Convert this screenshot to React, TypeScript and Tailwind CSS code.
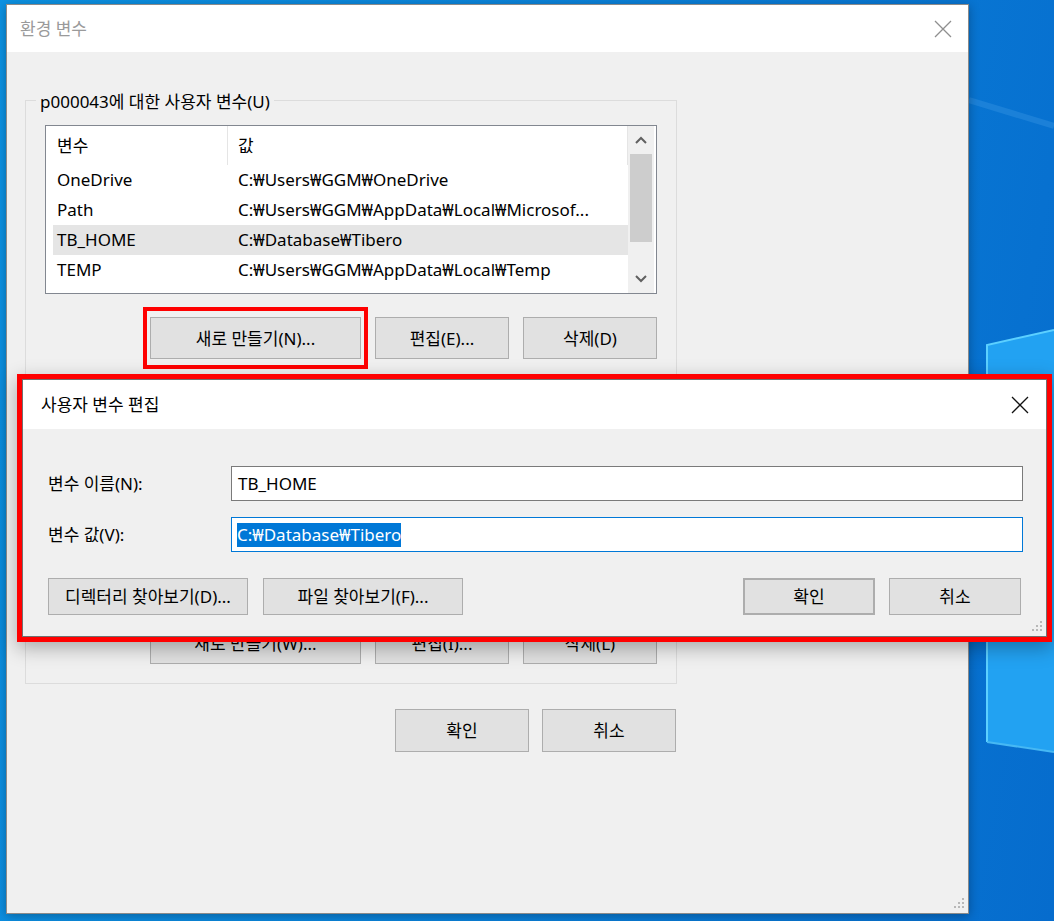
import type { ReactNode } from 'react';

const rows = [
  { name: 'OneDrive', value: 'C:₩Users₩GGM₩OneDrive' },
  { name: 'Path', value: 'C:₩Users₩GGM₩AppData₩Local₩Microsof...' },
  { name: 'TB_HOME', value: 'C:₩Database₩Tibero', selected: true },
  { name: 'TEMP', value: 'C:₩Users₩GGM₩AppData₩Local₩Temp' },
];

function CloseIcon({ color }: { color: string }) {
  return (
    <svg width="18" height="18" viewBox="0 0 18 18">
      <path d="M1 1 L17 17 M17 1 L1 17" stroke={color} strokeWidth="1.3" fill="none" />
    </svg>
  );
}

function Grip() {
  return (
    <svg width="12" height="12" viewBox="0 0 12 12">
      <rect x="9" y="0" width="2" height="2" fill="#b8b8b8" />
      <rect x="5" y="4" width="2" height="2" fill="#b8b8b8" />
      <rect x="9" y="4" width="2" height="2" fill="#b8b8b8" />
      <rect x="1" y="8" width="2" height="2" fill="#b8b8b8" />
      <rect x="5" y="8" width="2" height="2" fill="#b8b8b8" />
      <rect x="9" y="8" width="2" height="2" fill="#b8b8b8" />
    </svg>
  );
}

function Chevron({ up }: { up?: boolean }) {
  return (
    <svg width="12" height="8" viewBox="0 0 12 8">
      <path d={up ? 'M1 7 L6 2 L11 7' : 'M1 1 L6 6 L11 1'} stroke="#606060" strokeWidth="2" fill="none" />
    </svg>
  );
}

function WinButton({ children, className = '' }: { children: ReactNode; className?: string }) {
  return (
    <div
      className={`flex items-center justify-center border border-[#adadad] bg-[#e1e1e1] text-[17px] leading-none text-black ${className}`}
    >
      {children}
    </div>
  );
}

function VarList() {
  return (
    <div className="flex h-[169px] w-[612px] border border-[#828790] bg-white">
      <div className="flex min-w-0 flex-1 flex-col overflow-hidden">
        <div className="flex h-[39px] shrink-0 items-center border-r border-[#e5e5e5]">
          <div className="flex h-full w-[182px] items-center border-r border-[#e5e5e5] pl-[11px]">변수</div>
          <div className="pl-[10px]">값</div>
        </div>
        {rows.map((r) => (
          <div
            key={r.name}
            className={`ml-[7px] flex h-[30px] shrink-0 items-center whitespace-nowrap ${r.selected ? 'bg-[#e5e5e5]' : ''}`}
          >
            <div className="w-[175px] pl-[4px]">{r.name}</div>
            <div className="overflow-hidden pl-[10px]">{r.value}</div>
          </div>
        ))}
      </div>
      <div className="mr-[2px] flex w-[26px] flex-col bg-[#f0f0f0]">
        <div className="flex h-[28px] items-center justify-center">
          <Chevron up />
        </div>
        <div className="mx-[2px] h-[88px] bg-[#cdcdcd]" />
        <div className="flex-1" />
        <div className="flex h-[28px] items-center justify-center">
          <Chevron />
        </div>
      </div>
    </div>
  );
}

function ButtonRow({ highlight }: { highlight?: boolean }) {
  return (
    <div className="flex justify-end gap-[14px] pr-[19px]">
      <div className="relative">
        <WinButton className="h-[42px] w-[211px]">{highlight ? '새로 만들기(N)...' : '새로 만들기(W)...'}</WinButton>
        {highlight && <div className="absolute -inset-x-[7px] -inset-y-[10px] border-4 border-[#ff0000]" />}
      </div>
      <WinButton className="h-[42px] w-[134px]">{highlight ? '편집(E)...' : '편집(I)...'}</WinButton>
      <WinButton className="h-[42px] w-[134px]">{highlight ? '삭제(D)' : '삭제(L)'}</WinButton>
    </div>
  );
}

export default function App() {
  return (
    <div className="relative h-[921px] w-[1054px] overflow-hidden bg-[linear-gradient(100deg,#0c93e4_0%,#0a80d9_55%,#066ccd_100%)] font-['Noto_Sans','Noto_Sans_CJK_KR',sans-serif] text-[17px] leading-[24px] text-black">
      <svg className="absolute left-[969px] top-0" width="85" height="921" viewBox="969 0 85 921">
        <path d="M969 100 L1054 126" stroke="#2f8fe0" strokeWidth="6" opacity="0.5" />
        <path d="M987 345 L1054 330 L1054 752 L987 742 Z" fill="#22a2f2" />
        <path d="M987 742 L987 345 L1054 330" stroke="#5cd0ff" strokeWidth="2" fill="none" />
        <path d="M987 742 L1054 752" stroke="#46b8f4" strokeWidth="2" fill="none" />
      </svg>

      <div className="relative ml-[6px] mt-[4px] flex h-[910px] w-[963px] flex-col border border-[#8a8a8a] bg-[#f0f0f0] shadow-[0_2px_10px_rgba(0,0,0,0.3)]">
        <div className="flex h-[47px] shrink-0 items-center justify-between bg-white pl-[13px] pr-[16px] text-[#9a9a9a]">
          <span>환경 변수</span>
          <CloseIcon color="#8f8f8f" />
        </div>

        <div className="flex flex-col pl-[18px] pt-[48px]">
          <div className="relative h-[283px] w-[652px] border border-[#dcdcdc]">
            <span className="absolute -top-[11px] left-[10px] bg-[#f0f0f0] px-[4px]">p000043에 대한 사용자 변수(U)</span>
            <div className="pl-[19px] pt-[24px]">
              <VarList />
            </div>
            <div className="mt-[23px]">
              <ButtonRow highlight />
            </div>
          </div>

          <div className="mt-[14px] flex h-[287px] w-[652px] flex-col justify-end border border-[#dcdcdc] pb-[19px]">
            <ButtonRow />
          </div>

          <div className="mt-[25px] flex w-[652px] justify-end gap-[13px] pr-[1px]">
            <WinButton className="h-[43px] w-[134px]">확인</WinButton>
            <WinButton className="h-[43px] w-[134px]">취소</WinButton>
          </div>
        </div>

        <div className="absolute bottom-[3px] right-[3px]">
          <Grip />
        </div>
      </div>

      <div className="absolute left-[17px] top-[374px] h-[268px] w-[1035px] border-[5px] border-[#ff0000] shadow-[0_6px_18px_rgba(0,0,0,0.3)]">
        <div className="relative flex h-full flex-col border border-[#707070] bg-[#f0f0f0]">
          <div className="flex h-[49px] shrink-0 items-center justify-between bg-white pl-[18px] pr-[17px]">
            <span>사용자 변수 편집</span>
            <CloseIcon color="#111111" />
          </div>

          <div className="flex flex-col pl-[25px] pr-[23px] pt-[37px]">
            <div className="flex items-center">
              <div className="w-[183px]">변수 이름(N):</div>
              <div className="flex h-[35px] flex-1 items-center border border-[#7a7a7a] bg-white pl-[6px]">TB_HOME</div>
            </div>
            <div className="mt-[16px] flex items-center">
              <div className="w-[183px]">변수 값(V):</div>
              <div className="flex h-[35px] flex-1 items-center border border-[#0078d7] bg-white pl-[5px]">
                <span className="bg-[#0078d7] text-white">C:₩Database₩Tibero</span>
              </div>
            </div>

            <div className="mt-[26px] flex items-center pr-[2px]">
              <WinButton className="h-[37px] w-[200px]">디렉터리 찾아보기(D)...</WinButton>
              <WinButton className="ml-[15px] h-[37px] w-[200px]">파일 찾아보기(F)...</WinButton>
              <div className="flex-1" />
              <WinButton className="h-[37px] w-[132px] border-2 border-[#0078d7]">확인</WinButton>
              <WinButton className="ml-[14px] h-[37px] w-[132px]">취소</WinButton>
            </div>
          </div>

          <div className="absolute bottom-[3px] right-[3px]">
            <Grip />
          </div>
        </div>
      </div>
    </div>
  );
}
